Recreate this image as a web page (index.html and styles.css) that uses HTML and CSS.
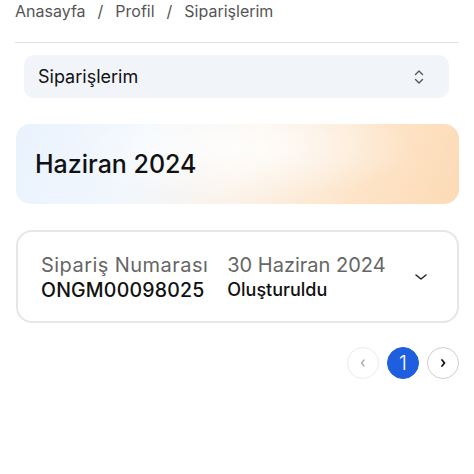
FILE: index.html
```html
<!DOCTYPE html>
<html lang="tr">
<head>
    <meta charset="UTF-8">
    <meta name="viewport" content="width=device-width, initial-scale=1.0">
    <title>Siparişlerim</title>
    <link rel="stylesheet" href="styles.css">
</head>
<body>
    <div class="page">
        <!-- Breadcrumb -->
        <nav class="breadcrumb">
            <a href="#">Anasayfa</a>
            <span class="sep">/</span>
            <a href="#">Profil</a>
            <span class="sep">/</span>
            <span>Siparişlerim</span>
        </nav>

        <!-- Section select -->
        <div class="select-box">
            <span>Siparişlerim</span>
            <svg width="12" height="16" viewBox="0 0 12 16" fill="none" stroke="#555" stroke-width="1.4" stroke-linecap="round" stroke-linejoin="round">
                <path d="M2.5 5.5 6 2 9.5 5.5"/>
                <path d="M2.5 10.5 6 14 9.5 10.5"/>
            </svg>
        </div>

        <!-- Month header -->
        <div class="month-card">
            <h2>Haziran 2024</h2>
        </div>

        <!-- Order -->
        <div class="order-card">
            <div class="order-col">
                <span class="label wide">Sipariş Numarası</span>
                <span class="value">ONGM00098025</span>
            </div>
            <div class="order-col">
                <span class="label">30 Haziran 2024</span>
                <span class="status">Oluşturuldu</span>
            </div>
            <svg class="toggle" width="14" height="8" viewBox="0 0 14 8" fill="none" stroke="#222" stroke-width="1.5" stroke-linecap="round" stroke-linejoin="round">
                <path d="M2 2 7 6 12 2"/>
            </svg>
        </div>

        <!-- Pagination -->
        <div class="pagination">
            <button class="page-btn disabled">
                <svg width="10" height="10" viewBox="0 0 10 10" fill="none" stroke="#aaa" stroke-width="1.4" stroke-linecap="round" stroke-linejoin="round"><path d="M6 2 3.5 5 6 8"/></svg>
            </button>
            <button class="page-btn active">1</button>
            <button class="page-btn">
                <svg width="10" height="10" viewBox="0 0 10 10" fill="none" stroke="#111" stroke-width="1.8" stroke-linecap="round" stroke-linejoin="round"><path d="M4 2 6.5 5 4 8"/></svg>
            </button>
        </div>
    </div>
</body>
</html>
```

FILE: styles.css
```css
/* General page */
body {
    margin: 0;
    font-family: Inter, "Noto Sans", sans-serif;
    background-color: #ffffff;
    color: #111;
}

.page {
    padding: 0 15px;
}

/* Breadcrumb */
.breadcrumb {
    display: flex;
    align-items: center;
    font-size: 16px;
    line-height: 20px;
    color: #555;
    padding-bottom: 21px;
    margin-top: 1px;
    border-bottom: 1px solid #e2e2e2;
}

.breadcrumb a {
    color: #555;
    text-decoration: none;
}

.breadcrumb .sep {
    margin: 0 12px;
}

/* Select box */
.select-box {
    margin: 12px 10px 0 9px;
    height: 43px;
    padding: 0 24px 0 14px;
    border-radius: 10px;
    background-color: #f1f4f9;
    display: flex;
    align-items: center;
    justify-content: space-between;
    font-size: 18px;
    color: #111;
}

/* Month card with gradient */
.month-card {
    margin: 26px 0 0 1px;
    height: 80px;
    border-radius: 15px;
    padding: 0 19px;
    display: flex;
    align-items: center;
    background:
        radial-gradient(ellipse 40% 65% at 50% 30%, rgba(255, 255, 255, 0.85), rgba(255, 255, 255, 0) 100%),
        linear-gradient(112deg, #e9f2fd 0%, #f2f7fd 28%, #fbf3ea 52%, #fde4c8 78%, #fcdab5 100%);
}

.month-card h2 {
    margin: 0;
    font-size: 25px;
    font-weight: 500;
    color: #111;
}

/* Order card */
.order-card {
    margin: 26px 0 0 1px;
    height: 89px;
    border: 2px solid #e6e6e6;
    border-radius: 16px;
    padding: 0 29px 0 23px;
    display: flex;
    align-items: center;
    gap: 19px;
}

.order-col {
    display: flex;
    flex-direction: column;
}

.order-col .label {
    font-size: 20px;
    line-height: 26px;
    color: #666;
}

.order-col .label.wide {
    letter-spacing: 0.45px;
}

.order-col .value {
    font-size: 19.5px;
    line-height: 24px;
    font-weight: 500;
    letter-spacing: 0.2px;
    color: #111;
}

.order-col .status {
    font-size: 18px;
    line-height: 24px;
    font-weight: 500;
    color: #111;
}

.toggle {
    margin-left: auto;
}

/* Pagination */
.pagination {
    display: flex;
    justify-content: flex-end;
    gap: 8px;
    margin-top: 24px;
}

.page-btn {
    width: 32px;
    height: 32px;
    border-radius: 50%;
    border: 1px solid #cfcfcf;
    background: #fff;
    padding: 0;
    display: flex;
    align-items: center;
    justify-content: center;
    font-family: inherit;
    font-size: 20px;
    font-weight: 300;
    cursor: pointer;
}

.page-btn.disabled {
    border-color: #ececec;
}

.page-btn.active {
    background-color: #1f5fdf;
    border-color: #1f5fdf;
    color: #fff;
}
```
